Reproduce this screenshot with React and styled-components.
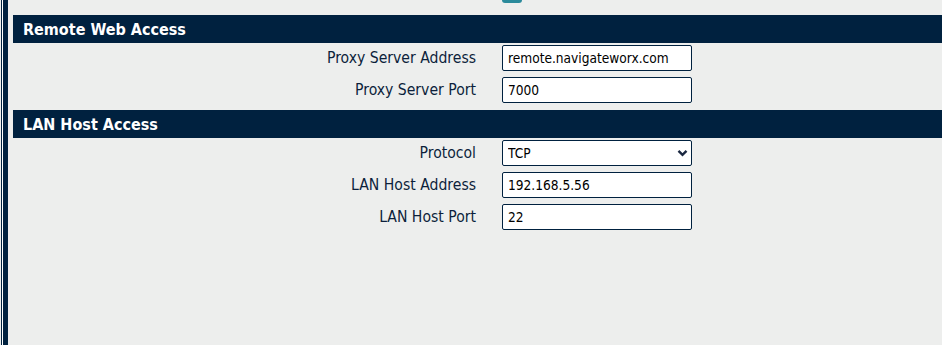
import styled, { createGlobalStyle } from "styled-components";

const navy = "#00213f";

const GlobalStyle = createGlobalStyle`
  html, body {
    margin: 0;
    height: 100%;
    overflow: hidden;
    background: #edeeed;
    font-family: "DejaVu Sans Condensed", "DejaVu Sans", sans-serif;
  }
`;

const Page = styled.div`
  display: flex;
  height: 100vh;
`;

const Rail = styled.div`
  flex: 0 0 7px;
  margin-left: 1px;
  background: linear-gradient(to right, ${navy} 0 1px, #ffffff 1px 2px, ${navy} 2px 7px);
`;

const Main = styled.main`
  flex: 1;
  min-width: 0;
  padding-left: 5px;
  margin-top: -20px;
`;

const SectionHeader = styled.h2`
  margin: 3px 0 0;
  height: 28px;
  padding-left: 10px;
  display: flex;
  align-items: center;
  background: ${navy};
  color: #ffffff;
  font-size: 16px;
  font-weight: bold;
  white-space: nowrap;
`;

const Row = styled.div`
  display: grid;
  grid-template-columns: 463px 190px;
  column-gap: 26px;
  padding: 2px 0 4px;
  align-items: center;
`;

const Label = styled.label`
  text-align: right;
  color: #0c1f3b;
  font-size: 15.6px;
  white-space: nowrap;
`;

const TextInput = styled.input`
  box-sizing: border-box;
  width: 190px;
  height: 26px;
  padding: 0 5px;
  border: 1px solid ${navy};
  border-radius: 2px;
  background: #ffffff;
  color: #000000;
  font-family: inherit;
  font-size: 13.6px;
  outline: none;
`;

const SelectWrap = styled.div`
  position: relative;
  width: 190px;
  height: 26px;
`;

const Select = styled.select`
  box-sizing: border-box;
  width: 100%;
  height: 100%;
  padding: 0 5px;
  border: 1px solid ${navy};
  border-radius: 2px;
  background: #ffffff;
  color: #000000;
  font-family: inherit;
  font-size: 13.6px;
  appearance: none;
  outline: none;
`;

const Chevron = styled.svg`
  position: absolute;
  right: 4px;
  top: 9px;
  width: 11px;
  height: 8px;
  pointer-events: none;
`;

const CheckLine = styled.div`
  display: flex;
  align-items: flex-start;
  gap: 6px;
  height: 26px;
  font-size: 15.6px;
  color: #0c1f3b;
`;

const Check = styled.span`
  margin-top: 1px;
  width: 20px;
  height: 20px;
  border-radius: 3px;
  background: #2b8a9b;
`;

const Field = ({ label, value }) => (
  <Row>
    <Label>{label}</Label>
    <TextInput defaultValue={value} />
  </Row>
);

export default function App() {
  return (
    <>
      <GlobalStyle />
      <Page>
        <Rail />
        <Main>
          <Row>
            <span />
            <CheckLine>
              <Check />
              <span>Logging</span>
            </CheckLine>
          </Row>

          <SectionHeader>Remote Web Access</SectionHeader>
          <Field label="Proxy Server Address" value="remote.navigateworx.com" />
          <Field label="Proxy Server Port" value="7000" />

          <SectionHeader>LAN Host Access</SectionHeader>
          <Row>
            <Label>Protocol</Label>
            <SelectWrap>
              <Select defaultValue="TCP">
                <option>TCP</option>
                <option>UDP</option>
              </Select>
              <Chevron viewBox="0 0 11 8">
                <path d="M1.5 1.8 L5.5 5.8 L9.5 1.8" fill="none" stroke="#1a2740" strokeWidth="2.4" />
              </Chevron>
            </SelectWrap>
          </Row>
          <Field label="LAN Host Address" value="192.168.5.56" />
          <Field label="LAN Host Port" value="22" />
        </Main>
      </Page>
    </>
  );
}
